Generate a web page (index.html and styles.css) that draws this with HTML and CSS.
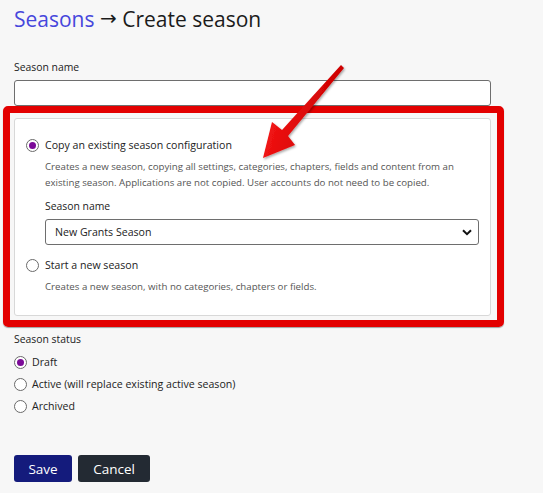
FILE: index.html
```html
<!DOCTYPE html>
<html lang="en">
<head>
<meta charset="utf-8">
<title>Create season</title>
<link rel="stylesheet" href="styles.css">
</head>
<body>
<div class="page">
  <h1 class="title"><a class="crumb" href="#">Seasons</a> <span class="sep">→</span> Create season</h1>

  <label class="label" for="season-name">Season name</label>
  <input class="text-input" id="season-name" type="text">

  <div class="highlight-wrap">
    <div class="card">
      <label class="radio-row">
        <input class="radio" type="radio" name="mode" checked>
        <span class="radio-text">Copy an existing season configuration</span>
      </label>
      <p class="desc">Creates a new season, copying all settings, categories, chapters, fields and content from an existing season. Applications are not copied. User accounts do not need to be copied.</p>
      <div class="label inner-label">Season name</div>
      <div class="select-wrap">
        <select class="select">
          <option>New Grants Season</option>
        </select>
        <svg class="chevron" width="10" height="7" viewBox="0 0 10 7"><path d="M1 1.2 L5 5.2 L9 1.2" fill="none" stroke="#111" stroke-width="2"/></svg>
      </div>
      <label class="radio-row second">
        <input class="radio" type="radio" name="mode">
        <span class="radio-text">Start a new season</span>
      </label>
      <p class="desc">Creates a new season, with no categories, chapters or fields.</p>
    </div>
    <div class="red-frame"></div>
  </div>

  <div class="label status-label">Season status</div>
  <div class="status-list">
    <label class="status-row"><input class="radio" type="radio" name="status" checked><span>Draft</span></label>
    <label class="status-row"><input class="radio" type="radio" name="status"><span>Active (will replace existing active season)</span></label>
    <label class="status-row"><input class="radio" type="radio" name="status"><span>Archived</span></label>
  </div>

  <div class="actions">
    <button class="btn btn-save" type="button">Save</button>
    <button class="btn btn-cancel" type="button">Cancel</button>
  </div>

  <svg class="arrow" width="100" height="110" viewBox="255 60 100 110">
    <defs>
      <linearGradient id="ag" x1="0" y1="0" x2="1" y2="0.3">
        <stop offset="0" stop-color="#ff1a1a"/>
        <stop offset="1" stop-color="#c80000"/>
      </linearGradient>
      <filter id="sh" x="-20%" y="-20%" width="140%" height="140%">
        <feDropShadow dx="1" dy="1.5" stdDeviation="1" flood-color="#000" flood-opacity="0.35"/>
      </filter>
    </defs>
    <polygon points="263,158 272,122 282,130 341,65 344,68 288,136 295,145" fill="url(#ag)" filter="url(#sh)"/>
  </svg>
</div>
</body>
</html>
```
FILE: styles.css
```css
* { box-sizing: border-box; }

html, body {
  margin: 0;
  padding: 0;
  background: #f7f7f7;
}

body {
  font-family: "Open Sans", "Noto Sans", sans-serif;
  color: #222;
}

.page {
  position: relative;
  width: 543px;
  height: 493px;
  padding: 3px 0 0 14px;
}

.title {
  margin: 0;
  height: 32px;
  font-size: 21px;
  font-weight: 400;
  line-height: 32px;
  color: #1b1b1b;
}

.crumb {
  color: #4646dc;
  text-decoration: none;
}

.sep {
  font-family: "DejaVu Sans", sans-serif;
  font-size: 20px;
  line-height: 0;
  position: relative;
  top: -2px;
}

.label {
  display: block;
  font-size: 10.4px;
  line-height: 16px;
  color: #222;
  margin-top: 24px;
}

.text-input {
  display: block;
  margin-top: 5px;
  width: 477px;
  height: 26px;
  border: 1px solid #6e6e6e;
  border-radius: 3px;
  background: #fff;
}

.highlight-wrap {
  position: relative;
  margin-top: 12px;
  width: 477px;
}

.card {
  background: #fff;
  border: 1px solid #d8d8d8;
  border-radius: 3px;
  padding: 17px 11px 20px 11px;
}

.radio-row {
  display: flex;
  align-items: center;
  gap: 6px;
  height: 18px;
}

.radio {
  appearance: none;
  -webkit-appearance: none;
  margin: 0;
  width: 13px;
  height: 13px;
  border: 1px solid #6a6a6a;
  border-radius: 50%;
  background: #fff;
  flex: none;
  display: grid;
  place-items: center;
}

.radio:checked::after {
  content: "";
  width: 7px;
  height: 7px;
  border-radius: 50%;
  background: #7b0a98;
}

.radio-text {
  font-size: 10.6px;
  color: #222;
}

.desc {
  margin: 5px 0 0 19px;
  font-size: 9.7px;
  line-height: 16px;
  color: #555;
}

.inner-label {
  margin: 7px 0 0 19px;
}

.select-wrap {
  position: relative;
  margin: 5px 0 0 19px;
}

.select {
  appearance: none;
  -webkit-appearance: none;
  display: block;
  width: 100%;
  height: 26px;
  border: 1px solid #6e6e6e;
  border-radius: 3px;
  background: #fff;
  font-family: inherit;
  font-size: 10.6px;
  color: #222;
  padding: 0 9px;
}

.chevron {
  position: absolute;
  right: 7px;
  top: 10px;
}

.radio-row.second {
  margin-top: 11px;
}

.red-frame {
  position: absolute;
  top: -12px;
  left: -11px;
  right: -13px;
  bottom: -11px;
  border: 7px solid #e30000;
  border-radius: 5px;
  box-shadow: 0 1px 1px rgba(0,0,0,0.35);
  pointer-events: none;
}

.status-label {
  margin-top: 15px;
}

.status-list {
  margin-top: 4px;
  display: flex;
  flex-direction: column;
}

.status-row {
  display: flex;
  align-items: center;
  gap: 5px;
  height: 22px;
  font-size: 10.6px;
}

.actions {
  margin-top: 38px;
  display: flex;
  gap: 6px;
}

.btn {
  height: 27px;
  border: none;
  border-radius: 3px;
  color: #fff;
  font-family: inherit;
  font-size: 13.5px;
  padding: 0;
}

.btn-save {
  width: 58px;
  background: #141b7c;
}

.btn-cancel {
  width: 72px;
  background: #232a33;
}

.arrow {
  position: absolute;
  left: 255px;
  top: 60px;
  pointer-events: none;
}
```
